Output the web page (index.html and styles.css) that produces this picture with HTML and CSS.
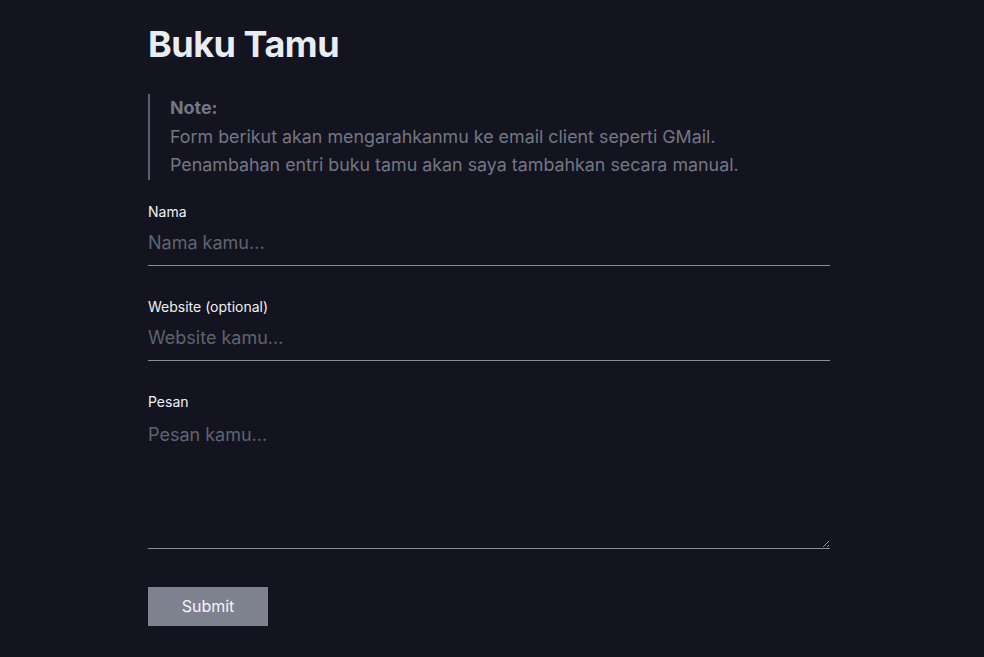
FILE: index.html
```html
<!doctype html>
<html lang="id">
  <head>
    <meta charset="UTF-8" />
    <meta name="viewport" content="width=device-width, initial-scale=1.0" />
    <title>Buku Tamu</title>
    <link rel="stylesheet" href="styles.css">
  </head>
  <body>
    <main class="page">
      <h1>Buku Tamu</h1>

      <blockquote class="note">
        <strong>Note:</strong><br />
        Form berikut akan mengarahkanmu ke email client seperti GMail.<br />
        Penambahan entri buku tamu akan saya tambahkan secara manual.
      </blockquote>

      <form class="guestbook">
        <div class="form-group">
          <label for="nama">Nama</label>
          <input type="text" id="nama" name="nama" placeholder="Nama kamu..." />
        </div>

        <div class="form-group">
          <label for="website">Website (optional)</label>
          <input type="text" id="website" name="website" placeholder="Website kamu..." />
        </div>

        <div class="form-group">
          <label for="pesan">Pesan</label>
          <textarea id="pesan" name="pesan" placeholder="Pesan kamu..."></textarea>
        </div>

        <button type="submit">Submit</button>
      </form>
    </main>
  </body>
</html>
```

FILE: styles.css
```css
* {
  box-sizing: border-box;
}
body {
  margin: 0;
  padding: 0 6px 0 0;
  background: #13141f;
  color: #e5e9f0;
  font-family: Inter, "Noto Sans", sans-serif;
}
.page {
  max-width: 682px;
  margin: 0 auto;
  padding-top: 22px;
}
h1 {
  margin: 0 0 28px;
  font-size: 36px;
  font-weight: 700;
  letter-spacing: -0.5px;
  color: #e8ecf3;
}
.note {
  margin: 0 0 23px;
  padding: 0 0 0 20px;
  border-left: 2px solid #5b5f6b;
  color: #737784;
  font-size: 17.85px;
  line-height: 28.5px;
}
.note strong {
  color: #737784;
}
.form-group {
  margin-bottom: 32px;
}
label {
  display: block;
  font-size: 14px;
  color: #eef0f4;
  margin-bottom: 6px;
}
input,
textarea {
  display: block;
  width: 100%;
  padding: 6px 0 12px;
  border: none;
  border-bottom: 1px solid #8a8d96;
  background: transparent;
  color: #e5e9f0;
  font-family: inherit;
  font-size: 18px;
  outline: none;
}
textarea {
  height: 133px;
  padding-top: 8px;
  resize: vertical;
}
input::placeholder,
textarea::placeholder {
  color: #5f6371;
}
button {
  width: 120px;
  height: 39px;
  margin-top: 6px;
  border: none;
  background: #7e828e;
  color: #f4f5f7;
  font-family: inherit;
  font-size: 16px;
  cursor: pointer;
}
```
